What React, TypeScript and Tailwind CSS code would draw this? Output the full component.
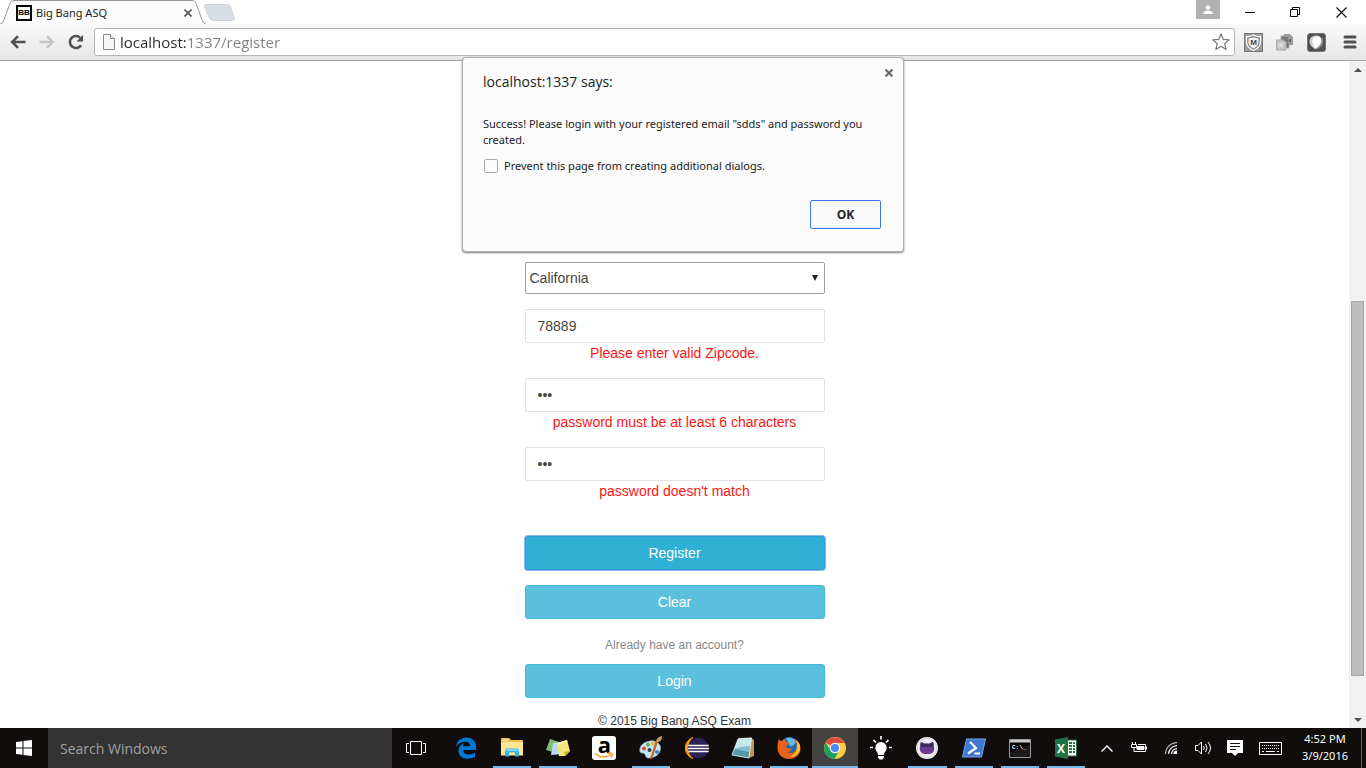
import React from "react";

const ui = "font-['Open_Sans','Noto_Sans',sans-serif]";

function TabStrip() {
  return (
    <div className="flex h-6 shrink-0 items-start bg-white">
      <div className="flex h-6 items-stretch">
        <svg width="14" height="24" viewBox="0 0 14 24" aria-hidden="true">
          <path d="M0 24C3 23.500 3.500 21 5 17L9.500 4.500C10.500 2 11.500 .5 14 .5V24Z" fill="#fbfbfb" />
          <path d="M0 24C3 23.500 3.500 21 5 17L9.500 4.500C10.500 2 11.500 .5 14 .5" fill="none" stroke="#999" />
        </svg>
        <div className="flex w-[178px] items-center border-t border-[#999] bg-[#fbfbfb] pl-0.5">
          <span className="flex size-4 items-center justify-center border-2 border-black bg-white text-[8px] font-bold leading-none text-black font-['Liberation_Sans',sans-serif]">
            BB
          </span>
          <span className="flex-1 whitespace-nowrap pl-1 text-[11px] leading-4 text-[#222] font-['Noto_Sans',sans-serif]">Big Bang ASQ</span>
          <button type="button" aria-label="Close tab" className="-mr-1 flex size-4 items-center justify-center">
            <svg width="8" height="8" viewBox="0 0 8 8" stroke="#5a5a5a" strokeWidth="1.7">
              <path d="M.5 .5l7 7M7.500 .5l-7 7" />
            </svg>
          </button>
        </div>
        <svg width="14" height="24" viewBox="0 0 14 24" aria-hidden="true">
          <path d="M0 .5C2.500 .5 3.500 2 4.500 4.500L9 17C10.500 21 11 23.500 14 24H0Z" fill="#fbfbfb" />
          <path d="M0 .5C2.500 .5 3.500 2 4.500 4.500L9 17C10.500 21 11 23.500 14 24" fill="none" stroke="#999" />
        </svg>
      </div>
      <button type="button" aria-label="New tab" className="-ml-0.5 mt-1">
        <svg width="32" height="17" viewBox="0 0 32 17">
          <path d="M1.500 .5H22C25 .5 26 1.500 27 4L30 13C30.500 15.500 30 16.500 28 16.500H10C7 16.500 6 15.500 5 13L.5 3C0 1 .3 .5 1.500 .5Z" fill="#d8dde5" stroke="#ccd1d8" />
        </svg>
      </button>
      <div className="ml-auto flex items-start">
        <button type="button" aria-label="Profile" className="flex h-[19px] w-6 items-center justify-center bg-[#b1b1b1]">
          <svg width="10" height="10" viewBox="0 0 10 10" fill="#fff">
            <circle cx="5" cy="2.500" r="2.200" />
            <path d="M.5 9V8C.5 6.500 3 5.500 5 5.500S9.500 6.500 9.500 8V9Z" />
          </svg>
        </button>
        <button type="button" aria-label="Minimize" className="ml-2 flex h-6 w-[44px] items-center justify-center">
          <svg width="10" height="10" viewBox="0 0 10 10" stroke="#000"><path d="M0 5.500H10" /></svg>
        </button>
        <button type="button" aria-label="Restore" className="flex h-6 w-[46px] items-center justify-center">
          <svg width="10" height="10" viewBox="0 0 10 10" fill="none" stroke="#000">
            <path d="M.5 2.500h7v7h-7zM2.500 2.500V.5h7v7h-2" />
          </svg>
        </button>
        <button type="button" aria-label="Close window" className="mr-0.5 flex h-6 w-[46px] items-center justify-center">
          <svg width="11" height="11" viewBox="0 0 11 11" stroke="#000" strokeWidth="1.100"><path d="M.5 .5l10 10M10.500 .5l-10 10" /></svg>
        </button>
      </div>
    </div>
  );
}

function Toolbar() {
  return (
    <div className="flex h-[37px] shrink-0 items-center border-b border-[#a6a6a6] bg-linear-to-b from-[#f9f9f9] to-[#e6e6e6] pl-[10px] pr-[9px]">
      <div className="flex items-center gap-[13px]">
        <button type="button" aria-label="Back">
          <svg width="16" height="14" viewBox="0 0 16 14" fill="none" stroke="#505050" strokeWidth="2.600">
            <path d="M2.500 7H15.500M8 1.200L2.200 7L8 12.800" />
          </svg>
        </button>
        <button type="button" aria-label="Forward">
          <svg width="16" height="14" viewBox="0 0 16 14" fill="none" stroke="#c4c4c4" strokeWidth="2.400">
            <path d="M.5 7H13.500M8 1.200L13.800 7L8 12.800" />
          </svg>
        </button>
        <button type="button" aria-label="Reload">
          <svg width="16" height="16" viewBox="0 0 16 16" fill="none">
            <path d="M13 11.200A6 6 0 1 1 12.200 3.800" stroke="#505050" strokeWidth="2.600" />
            <path d="M15 1V7.500H8.500Z" fill="#505050" />
          </svg>
        </button>
      </div>
      <div className="ml-[10px] flex h-7 flex-1 items-center rounded-[3px] border border-[#b5b5b5] bg-white pl-2 pr-1">
        <svg width="12" height="16" viewBox="0 0 12 16" fill="#f6f6f6" stroke="#888" aria-hidden="true">
          <path d="M.5 .5H7.500L11.500 4.500V15.500H.5Z" />
          <path d="M7.500 .5V4.500H11.500" />
        </svg>
        <input
          aria-label="Address"
          defaultValue="localhost:1337/register"
          className="ml-[5px] h-6 min-w-0 flex-1 bg-[linear-gradient(to_right,#2b2b2b_68px,#808080_68px)] bg-clip-text text-[15px] text-transparent outline-none"
        />
        <button type="button" aria-label="Bookmark this page">
          <svg width="18" height="18" viewBox="0 0 18 18" fill="#fff" stroke="#777" strokeWidth="1.200" strokeLinejoin="round">
            <path d="M9 1L11.300 6.400L17.200 6.900L12.700 10.700L14.100 16.500L9 13.300L3.900 16.500L5.300 10.700L.8 6.900L6.700 6.400Z" />
          </svg>
        </button>
      </div>
      <div className="ml-[9px] flex items-center gap-[13px]">
        <button type="button" aria-label="McAfee">
          <svg width="19" height="19" viewBox="0 0 19 19">
            <rect x=".5" y=".5" width="18" height="18" fill="#9b9b9b" stroke="#777" />
            <path d="M2.500 3.500Q6 4 9.500 2Q13 4 16.500 3.500V9Q16 15 9.500 17.500Q3 15 2.500 9Z" fill="#888" stroke="#fff" strokeWidth="1.300" />
            <path d="M4.500 5.500L9.500 4.500L14.500 5.500V10Q13.500 13.500 9.500 15.500Q5.500 13.500 4.500 10Z" fill="#f3f3f3" />
            <text x="9.500" y="12" textAnchor="middle" fontSize="8" fontWeight="bold" fontFamily="Liberation Sans, sans-serif" fill="#444">M</text>
          </svg>
        </button>
        <button type="button" aria-label="Copy tabs">
          <svg width="18" height="18" viewBox="0 0 18 18">
            <path d="M8 1H14L17 4V12H8Z" fill="#9a9a9a" />
            <path d="M5 3H11L13 5V15H5Z" fill="#777" stroke="#aaa" />
            <path d="M.5 7H7L10 9V17H.5Z" fill="#c5c5c5" stroke="#aaa" />
            <path d="M3 10H7V14H3Z" fill="#ddd" />
            <path d="M13 6h2v3h-2z" fill="#666" />
          </svg>
        </button>
        <button type="button" aria-label="Shield">
          <svg width="19" height="19" viewBox="0 0 19 19">
            <rect x=".5" y=".5" width="18" height="18" rx="2.500" fill="#4e4e4e" stroke="#777" />
            <path d="M15 3.500C18.500 9 15 16.500 7 17C13 14 15 9 15 3.500Z" fill="#8a8a8a" />
            <path d="M2.500 8C3 4 6 2.500 9 2.500C13 2.500 15 4.500 14.500 8C14 12 11 14.500 8 16C4.500 14 2.200 11 2.500 8Z" fill="#cfcfcf" />
            <path d="M5.500 7C6 4.500 8 3.500 10.500 3.500C13.500 4 14.500 6 14 8.500C13.500 12 11 14.500 8.500 15.500C6 13 5 10 5.500 7Z" fill="#fff" />
          </svg>
        </button>
        <button type="button" aria-label="Menu" className="ml-1">
          <svg width="14" height="14" viewBox="0 0 14 14" stroke="#505050" strokeWidth="3" strokeLinecap="round">
            <path d="M2 2H12M2 7H12M2 12H12" />
          </svg>
        </button>
      </div>
    </div>
  );
}

function AlertDialog() {
  return (
    <div
      role="dialog"
      aria-labelledby="alert-title"
      className="absolute left-1/2 top-[57px] z-10 w-[442px] -translate-x-1/2 rounded-sm border border-[#b0b0b0] bg-[#fbfbfb] pb-[22px] pl-5 pr-[22px] pt-[14px] text-[#222] shadow-[0_1px_2px_rgba(0,0,0,0.5)]"
    >
      <button type="button" aria-label="Close dialog" className="absolute right-[10px] top-[11px]">
        <svg width="8" height="8" viewBox="0 0 8 8" stroke="#666" strokeWidth="2"><path d="M.5 .5l7 7M7.500 .5l-7 7" /></svg>
      </button>
      <h1 id="alert-title" className="text-[14px] leading-5">localhost:1337 says:</h1>
      <p className="mt-6 text-[11px] leading-4 font-['Noto_Sans',sans-serif]">
        Success! Please login with your registered email "sdds" and password you
        <br />
        created.
      </p>
      <label className="mt-[10px] flex items-center gap-[6px] text-[11px] leading-4 font-['Noto_Sans',sans-serif]">
        <input type="checkbox" className="ml-px size-[14px] appearance-none rounded-xs border border-[#aaa] bg-[#fbfbfb]" />
        Prevent this page from creating additional dialogs.
      </label>
      <div className="mt-[26px] flex justify-end">
        <button type="button" className="h-[29px] w-[71px] rounded-xs border border-[#3b78e7] bg-[#f8f8f8] text-xs font-bold">
          OK
        </button>
      </div>
    </div>
  );
}

function Field({ label, value, type, error }: { label: string; value: string; type: string; error: string }) {
  return (
    <div className="mt-[15px]">
      <input
        aria-label={label}
        type={type}
        defaultValue={value}
        className="block h-[34px] w-full rounded-xs border border-[#e2e2e2] px-3 text-sm text-[#444] outline-none"
      />
      <p className="text-center text-sm leading-5 text-[#ff1414]">{error}</p>
    </div>
  );
}

function RegisterForm() {
  const plain = "block h-[34px] w-full rounded-[3px] border border-[#46b8da] bg-[#5bc0de] text-sm text-white";
  return (
    <form className="mx-auto w-[300px] pt-[201px] font-['Liberation_Sans',Arial,sans-serif]" onSubmit={(e) => e.preventDefault()}>
      <div className="relative">
        <select aria-label="State" className="block h-8 w-full appearance-none rounded-xs border border-[#a0a0a0] bg-white pl-1 text-sm text-[#444]">
          <option>California</option>
        </select>
        <svg className="pointer-events-none absolute right-[7px] top-[13px]" width="6" height="6" viewBox="0 0 6 6" aria-hidden="true">
          <path d="M0 0H6L3 6Z" fill="#222" />
        </svg>
      </div>
      <Field label="Zipcode" value="78889" type="text" error="Please enter valid Zipcode." />
      <Field label="Password" value="abc" type="password" error="password must be at least 6 characters" />
      <Field label="Confirm password" value="abd" type="password" error="password doesn't match" />
      <button type="submit" className="mt-[35px] block h-[34px] w-full rounded-[3px] border border-[#2f9fd8] bg-[#31b0d5] text-sm text-white ring-1 ring-[#8fb4f8]">
        Register
      </button>
      <button type="reset" className={plain + " mt-[15px]"}>Clear</button>
      <p className="mt-4 text-center text-xs leading-5 text-[#888]">Already have an account?</p>
      <button type="button" className={plain + " mt-[9px]"}>Login</button>
      <footer className="mt-[13px] text-center text-xs leading-5 text-[#333]">© 2015 Big Bang ASQ Exam</footer>
    </form>
  );
}

function PageScrollbar() {
  return (
    <div className="flex w-[17px] shrink-0 flex-col items-center bg-[#f1f1f1]" aria-hidden="true">
      <div className="flex h-[17px] items-center">
        <svg width="8" height="4" viewBox="0 0 8 4"><path d="M0 4L4 0L8 4Z" fill="#505050" /></svg>
      </div>
      <div className="grow-[224]" />
      <div className="w-[13px] grow-[374] border border-[#a8a8a8] bg-[#bdbdbd]" />
      <div className="grow-[35]" />
      <div className="flex h-[17px] items-center">
        <svg width="8" height="4" viewBox="0 0 8 4"><path d="M0 0L4 4L8 0Z" fill="#505050" /></svg>
      </div>
    </div>
  );
}

const apps: { name: string; open?: boolean; active?: boolean; icon: React.ReactNode }[] = [
  {
    name: "Edge",
    icon: (
      <svg width="22" height="22" viewBox="0 0 22 22">
        <path d="M1 10C2 4 6 .5 11.500 .5C18 .5 21 5 21 10.500V13H8C8 16 10.500 17.500 13.500 17.500C16 17.500 18 17 20 15.800V20C18 21.200 15.500 21.700 12.500 21.700C7 21.700 3.500 18.500 3.500 14C3.500 10.500 5.500 7.500 9 6C8.300 7 8 8 8 9.200H15C15 6 13 4.800 10 4.800C6 4.800 3 7 1 10Z" fill="#0078d7" />
      </svg>
    ),
  },
  {
    name: "File Explorer", open: true,
    icon: (
      <svg width="22" height="20" viewBox="0 0 22 20">
        <path d="M0 1Q0 0 1 0H8L10 2H21Q22 2 22 3V17H0Z" fill="#f0c04f" />
        <path d="M2 1.500H7V2.500H2Z" fill="#fff" />
        <path d="M0 4H22V17.500H0Z" fill="#ffe793" />
        <path d="M4 18.500V12Q4 10.500 5.500 10.500H16.500Q18 10.500 18 12V18.500H14V14.500H8V18.500Z" fill="#35b5ea" />
        <path d="M5.500 10.500H16.500Q18 10.500 18 12V13H4V12Q4 10.500 5.500 10.500Z" fill="#7bd3f3" />
      </svg>
    ),
  },
  {
    name: "Sticky Notes", open: true,
    icon: (
      <svg width="24" height="20" viewBox="0 0 24 20">
        <path d="M4 1L13 4L10 15L0 12Z" fill="#7cbd72" />
        <path d="M7 5L16 4L17 16L5 17Z" fill="#b5dcf4" />
        <path d="M11 5L21 2L24 13L19 18L13 18Z" fill="#f7e37c" />
        <path d="M24 13L19 18L18 14Z" fill="#d6ac35" />
        <path d="M11 5L21 2L21.500 4L11.400 7Z" fill="#fff0a4" />
      </svg>
    ),
  },
  {
    name: "Amazon",
    icon: (
      <span className="flex size-6 flex-col items-center rounded-[3px] bg-white text-black">
        <span className="h-4 text-[22px] font-bold leading-4 font-['Open_Sans',sans-serif]">a</span>
        <svg width="20" height="7" viewBox="0 0 20 7" fill="none" stroke="#f79b1b" strokeWidth="1.500">
          <path d="M1 1.500Q9 8 17 2.500M14 1.200Q19 .5 18 3.500Q17.500 5 17 5.500" />
        </svg>
      </span>
    ),
  },
  {
    name: "Paint", open: true,
    icon: (
      <svg width="24" height="24" viewBox="0 0 24 24">
        <path d="M11 5C17 4 22 8 21.500 13C21 18 16 22 9.500 22C6 22 7 18 5 17.500C3 17 .8 17.500 .8 14C1 9 5 6 11 5Z" fill="#c7e4f4" stroke="#8db9d4" strokeWidth=".7" />
        <circle cx="5" cy="12.500" r="2" fill="#e44b35" /><circle cx="9" cy="8.800" r="2" fill="#69b045" />
        <circle cx="14" cy="7.500" r="2" fill="#f4b52b" /><circle cx="10.500" cy="14" r="2" fill="#29434f" />
        <circle cx="18" cy="16" r="2" fill="#3f83c8" />
        <path d="M18.500 6L13 22L11.500 23L12 21L17 5.500Z" fill="#de7818" stroke="#ad540c" strokeWidth=".7" />
        <path d="M17 5.500C17 3 20 .5 23 0C23.500 3 21 6 18.800 6.500Z" fill="#c49b6a" />
      </svg>
    ),
  },
  {
    name: "Eclipse",
    icon: (
      <svg width="24" height="22" viewBox="0 0 24 22">
        <path d="M8 .5A11 11 0 0 0 8 21.500A13 13 0 0 1 8 .5Z" fill="#f49a20" stroke="#f49a20" />
        <circle cx="13.500" cy="11" r="10.300" fill="#2c2255" />
        <path d="M3.300 8.500H23.700M3 11.500H24M3.300 14.500H23.700" stroke="#fff" strokeWidth="1.700" />
      </svg>
    ),
  },
  {
    name: "Notepad", open: true,
    icon: (
      <svg width="24" height="22" viewBox="0 0 24 22">
        <path d="M7 1L20 .5L23 3V19L18 21Z" fill="#bb9952" />
        <path d="M7 2L20.500 1L18 21L1 18Z" fill="#82bdc9" />
        <path d="M7 2L20.500 1L19.500 9Q10 9 3.500 12Z" fill="#c4e9ed" />
        <path d="M1 18L3.500 12L18.500 15L18 21Z" fill="#5799a8" />
        <path d="M7 2L20.500 1L18 21L1 18Z" fill="none" stroke="#e5f5f5" strokeWidth=".8" />
      </svg>
    ),
  },
  {
    name: "Firefox", open: true,
    icon: (
      <svg width="24" height="24" viewBox="0 0 24 24">
        <circle cx="12.500" cy="11" r="10" fill="#1e65b0" />
        <path d="M9 2Q15 0 19 5Q17 11 13 10Z" fill="#62bae7" />
        <path d="M2 3Q3 5 5 5Q7 3 9 3Q8 5 9 6Q11 6 12 7Q12 9 9 10Q9 12 11 12Q13 13 15 12Q15 15 11 16Q15 19 19 14Q21 10 18 3Q23 6 23.500 12C24 18 19 23 12 23C5 23 .5 18 .5 12Q.5 6 2 3Z" fill="#e5611d" />
        <path d="M19 4Q24 8 23 14Q20 21 13 21Q20 17 20 12Q21 8 19 4Z" fill="#ffc832" />
      </svg>
    ),
  },
  {
    name: "Chrome", open: true, active: true,
    icon: (
      <svg width="22" height="22" viewBox="0 0 22 22">
        <circle cx="11" cy="11" r="11" fill="#ffcd40" />
        <path d="M11 11L1.500 5.500A11 11 0 0 1 20.500 6H11Z" fill="#dd4b3e" />
        <path d="M1.500 5.500A11 11 0 0 0 10.500 22L15.300 13.500L11 16L6.700 13.500Z" fill="#1aa15f" />
        <circle cx="11" cy="11" r="5.200" fill="#fff" />
        <circle cx="11" cy="11" r="4.100" fill="#4a8bf5" />
      </svg>
    ),
  },
  {
    name: "Ideas",
    icon: (
      <svg width="22" height="24" viewBox="0 0 22 24" fill="#fff">
        <path d="M11 6A5.700 5.700 0 0 1 16.700 11.700C16.700 15 14 16 14 19H8C8 16 5.300 15 5.300 11.700A5.700 5.700 0 0 1 11 6ZM8 20H14V21.500L12.500 23.500H9.500L8 21.500Z" />
        <path d="M11 0V3.500M3.500 4L6 6.500M18.500 4L16 6.500M0 11.500H3M19 11.500H22" stroke="#fff" strokeWidth="1.700" />
      </svg>
    ),
  },
  {
    name: "GitHub", open: true,
    icon: (
      <svg width="22" height="22" viewBox="0 0 22 22">
        <circle cx="11" cy="11" r="11" fill="#f2f0f6" />
        <circle cx="11" cy="11" r="9.700" fill="none" stroke="#d7d3df" />
        <path d="M5 5L8.500 6.800Q11 6.200 13.500 6.800L17 5Q18 7.500 17.500 9Q19 11 18 13.500C17 16.500 14 17 11 17S5 16.500 4 13.500Q3 11 4.500 9Q4 7.500 5 5Z" fill="#6a3a92" />
        <path d="M5 5L8.500 6.800Q11 6.200 13.500 6.800L17 5Q18 7.500 17.500 9L17.800 10H4.200L4.500 9Q4 7.500 5 5Z" fill="#43265f" />
      </svg>
    ),
  },
  {
    name: "PowerShell", open: true,
    icon: (
      <svg width="24" height="20" viewBox="0 0 24 20">
        <path d="M4.500 1H23.500L19.500 19H.5Z" fill="#3f78d0" stroke="#78a4e4" />
        <path d="M8 4L14 10L6 15.500M12.500 15.500H18" fill="none" stroke="#fff" strokeWidth="2.200" />
      </svg>
    ),
  },
  {
    name: "Command Prompt", open: true,
    icon: (
      <svg width="22" height="19" viewBox="0 0 22 19">
        <path d="M.5 .5H21.500V18.500H.5Z" fill="#050505" stroke="#999" />
        <path d="M1 1H21V3.500H1Z" fill="#ccc" />
        <path d="M1 18V13Q10 12 21 5V18Z" fill="#333" opacity=".5" />
        <text x="3" y="10" fontSize="6" fontWeight="bold" fontFamily="Liberation Mono, monospace" fill="#eee">C:\_</text>
      </svg>
    ),
  },
  {
    name: "Excel", open: true,
    icon: (
      <svg width="22" height="22" viewBox="0 0 22 22">
        <path d="M12 3H21.500V19H12Z" fill="#fff" stroke="#1f7345" />
        <path d="M14 6H17M18 6H20M14 9H17M18 9H20M14 12H17M18 12H20M14 15H17M18 15H20" stroke="#1f7345" strokeWidth="1.800" />
        <path d="M0 2.500L13 0V22L0 19.500Z" fill="#1f7345" />
        <text x="6" y="15.500" textAnchor="middle" fontSize="12" fontWeight="bold" fontFamily="Open Sans, sans-serif" fill="#fff">X</text>
      </svg>
    ),
  },
];

const tray: { name: string; icon: React.ReactNode }[] = [
  {
    name: "Show hidden icons",
    icon: <svg width="12" height="7" viewBox="0 0 12 7" fill="none" stroke="#fff" strokeWidth="1.400"><path d="M.5 6.500L6 1L11.500 6.500" /></svg>,
  },
  {
    name: "Battery",
    icon: (
      <svg width="16" height="12" viewBox="0 0 16 12" fill="none" stroke="#fff">
        <path d="M1.500 0V2M4.500 0V2M.5 2.500H5.500V5.500H.5ZM3 5.500V9.500H5M7 2.500H14.500V9.500H5M15.500 4.500V7.500" />
        <path d="M6 7.500V4.500H13V7.500Z" fill="#fff" />
      </svg>
    ),
  },
  {
    name: "Wi-Fi",
    icon: (
      <svg width="12" height="12" viewBox="0 0 12 12" fill="none" stroke="#fff" strokeWidth="1.200">
        <path d="M.6 12A11.400 11.400 0 0 1 12 .6" stroke="#bbb" />
        <path d="M3.600 12A8.400 8.400 0 0 1 12 3.600M6.600 12A5.400 5.400 0 0 1 12 6.600" />
        <path d="M9 12A3 3 0 0 1 12 9V12Z" fill="#fff" />
      </svg>
    ),
  },
  {
    name: "Volume",
    icon: (
      <svg width="17" height="14" viewBox="0 0 17 14" fill="none" stroke="#fff">
        <path d="M.5 4.500H3L6.500 1V13L3 9.500H.5Z" />
        <path d="M8.500 5Q10 7 8.500 9M10.500 3Q13.500 7 10.500 11M13 1Q18 7 13 13" />
      </svg>
    ),
  },
  {
    name: "Notifications",
    icon: (
      <svg width="16" height="16" viewBox="0 0 16 16">
        <path d="M0 0H16V13H11L8 16L5 13H0Z" fill="#fff" />
        <path d="M3 3.500H13M3 6.500H13M3 9.500H9" stroke="#111" />
      </svg>
    ),
  },
];

function Taskbar() {
  return (
    <div className="flex h-10 shrink-0 items-stretch bg-[#100d0c] text-white">
      <button type="button" aria-label="Start" className="flex w-12 items-center justify-center">
        <svg width="16" height="16" viewBox="0 0 16 16" fill="#fff">
          <path d="M0 2L6.500 1.200V7.500H0ZM7.500 1L16 0V7.500H7.500ZM0 8.500H6.500V14.800L0 14ZM7.500 8.500H16V16L7.500 15Z" />
        </svg>
      </button>
      <input aria-label="Search Windows" placeholder="Search Windows" className="w-[344px] min-w-0 bg-[#333] pl-3 text-[14px] text-white outline-none placeholder:text-[#a0a0a0]" />
      <button type="button" aria-label="Task View" className="flex w-12 items-center justify-center">
        <svg width="20" height="14" viewBox="0 0 20 14" fill="none" stroke="#fff">
          <path d="M4.500 .5H15.500V13.500H4.500ZM3 2.500H.5V11.500H3M17 2.500H19.500V11.500H17" />
        </svg>
      </button>
      <div className="ml-[3px] grid w-[646px] grid-cols-14">
        {apps.map((a) => (
          <button
            key={a.name}
            type="button"
            aria-label={a.name}
            className={"flex flex-col items-center px-1 " + (a.active ? "bg-[#444240]" : "")}
          >
            <span className="flex h-[38px] items-center justify-center pt-0.5">{a.icon}</span>
            {a.open && <span className={"h-0.5 bg-[#76b9ed] " + (a.active ? "w-[46px]" : "w-full")} />}
          </button>
        ))}
      </div>
      <div className="ml-auto flex items-center">
        {tray.map((t) => (
          <button key={t.name} type="button" aria-label={t.name} className="flex h-10 w-8 items-center justify-center">
            {t.icon}
          </button>
        ))}
        <button type="button" aria-label="Touch keyboard" className="flex h-10 w-[38px] items-center justify-center">
          <svg width="23" height="13" viewBox="0 0 23 13" fill="none" stroke="#fff">
            <path d="M.5 .5H22.500V12.500H.5Z" />
            <path d="M3 3.500H20M3 6.500H20" strokeDasharray="1 1" />
            <path d="M3 9.500H5M7 9.500H16M18 9.500H20" />
          </svg>
        </button>
        <button type="button" aria-label="Date and time" className="flex w-[72px] flex-col items-center pb-0.5 text-[11px] leading-[17px] font-['Noto_Sans',sans-serif]">
          <span>4:52 PM</span>
          <span>3/9/2016</span>
        </button>
        <button type="button" aria-label="Show desktop" className="h-10 w-[5px] border-l border-[#666]" />
      </div>
    </div>
  );
}

export default function App() {
  return (
    <div className={"relative flex h-screen flex-col overflow-hidden bg-white " + ui}>
      <TabStrip />
      <Toolbar />
      <AlertDialog />
      <div className="flex min-h-0 flex-1">
        <main className="min-w-0 flex-1 overflow-hidden">
          <RegisterForm />
        </main>
        <PageScrollbar />
      </div>
      <Taskbar />
    </div>
  );
}
